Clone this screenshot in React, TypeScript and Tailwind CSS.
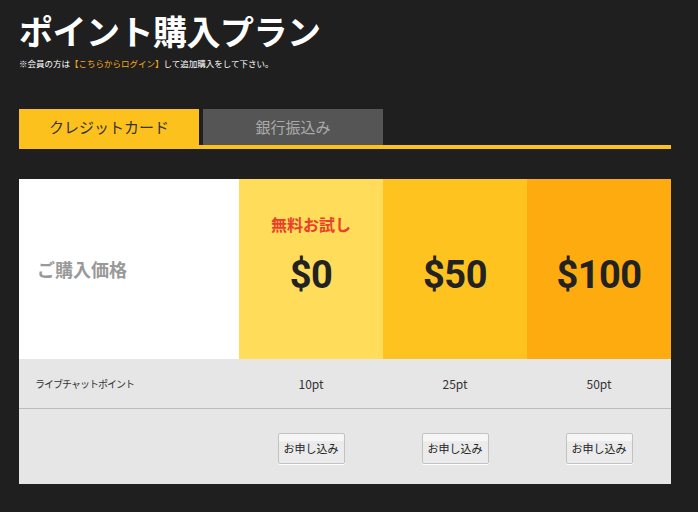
import React from 'react';

const plans = [
  { price: '$0', points: '10pt', bg: 'bg-[#ffdc5a]', trial: true },
  { price: '$50', points: '25pt', bg: 'bg-[#fec31f]', trial: false },
  { price: '$100', points: '50pt', bg: 'bg-[#feab0f]', trial: false },
];

const jp = "font-['Noto_Sans_CJK_JP',sans-serif]";

export default function App() {
  return (
    <div className={`w-[698px] h-[512px] bg-[#1f1f1f] pl-[19px] pt-[9px] ${jp}`}>
      <div className="w-[652px]">
        {/* Heading */}
        <h1 className="text-[34px] leading-[44px] font-bold text-white tracking-[-0.5px]">ポイント購入プラン</h1>
        <p className="text-[8.5px] leading-[12px] text-white mt-[4px]">
          ※会員の方は<span className="text-[#f5aa1e]">【こちらからログイン】</span>して追加購入をして下さい。
        </p>

        {/* Tabs */}
        <div className="mt-[40px] flex gap-[4px]">
          <div className="w-[180px] h-[36px] bg-[#fdc11d] flex items-center justify-center text-[15px] text-[#333]">
            クレジットカード
          </div>
          <div className="w-[180px] h-[36px] bg-[#555555] flex items-center justify-center text-[15px] text-[#aaa]">
            銀行振込み
          </div>
        </div>
        <div className="h-[4px] bg-[#fdc11d]" />

        {/* Price table */}
        <div className="mt-[30px] grid grid-cols-[220px_144px_144px_144px] bg-[#e6e6e6]">
          <div className="h-[180px] bg-white flex items-center pl-[18px] text-[18px] font-bold text-[#999]">
            ご購入価格
          </div>
          {plans.map((p) => (
            <div key={p.price} className={`h-[180px] ${p.bg} relative flex items-center justify-center`}>
              {p.trial && (
                <span className="absolute top-[33px] left-0 right-0 text-center text-[16px] font-bold text-[#e8402a]">
                  無料お試し
                </span>
              )}
              <span className="text-[38px] font-bold text-[#222] font-['Roboto',sans-serif] tracking-[-0.5px] mt-[12px]">
                {p.price}
              </span>
            </div>
          ))}

          <div className="h-[50px] border-b border-[#bcbcbc] flex items-center pl-[16px] text-[10px] tracking-[-1px] text-[#333]">
            ライブチャットポイント
          </div>
          {plans.map((p) => (
            <div key={p.points} className="h-[50px] border-b border-[#bcbcbc] flex items-center justify-center text-[12px] text-[#333]">
              {p.points}
            </div>
          ))}

          <div className="h-[75px]" />
          {plans.map((p) => (
            <div key={p.price + 'btn'} className="h-[75px] flex items-center justify-center">
              <button className="w-[67px] h-[31px] rounded-[2px] border border-[#c2c2c2] bg-[linear-gradient(#f6f6f6_0%,#f6f6f6_25%,#ebebeb_26%,#ebebeb_100%)] shadow-[0_1px_0_#fff] text-[11px] text-[#222] mt-[3px]">
                お申し込み
              </button>
            </div>
          ))}
        </div>
      </div>
    </div>
  );
}
